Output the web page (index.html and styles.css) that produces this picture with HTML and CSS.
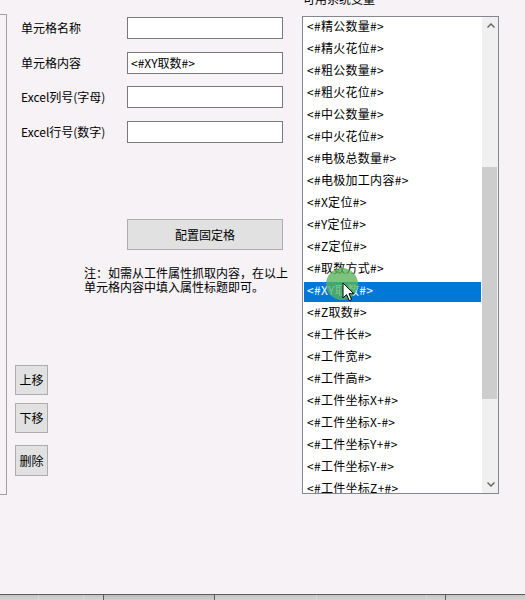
FILE: index.html
```html
<!DOCTYPE html>
<html lang="zh-CN">
<head>
<meta charset="utf-8">
<title>固定格配置</title>
<link rel="stylesheet" href="styles.css">
</head>
<body>
<div class="screen">
  <div class="window">
    <div class="side-frame"></div>

    <div class="editor">
      <div class="fields">
        <div class="field">
          <span class="field-label">单元格名称</span>
          <div class="textbox"></div>
        </div>
        <div class="field">
          <span class="field-label">单元格内容</span>
          <div class="textbox">&lt;#XY取数#&gt;</div>
        </div>
        <div class="field">
          <span class="field-label">Excel列号(字母)</span>
          <div class="textbox"></div>
        </div>
        <div class="field">
          <span class="field-label">Excel行号(数字)</span>
          <div class="textbox"></div>
        </div>
      </div>

      <button class="btn btn-wide">配置固定格</button>

      <p class="note">注：如需从工件属性抓取内容，在以上<br>单元格内容中填入属性标题即可。</p>

      <div class="order-buttons">
        <button class="btn btn-small">上移</button>
        <button class="btn btn-small btn-down">下移</button>
        <button class="btn btn-small btn-del">删除</button>
      </div>
    </div>

    <div class="vars">
      <div class="vars-title">可用系统变量</div>
      <div class="listbox">
        <ul class="items">
          <li class="item">&lt;#精公数量#&gt;</li>
          <li class="item">&lt;#精火花位#&gt;</li>
          <li class="item">&lt;#粗公数量#&gt;</li>
          <li class="item">&lt;#粗火花位#&gt;</li>
          <li class="item">&lt;#中公数量#&gt;</li>
          <li class="item">&lt;#中火花位#&gt;</li>
          <li class="item">&lt;#电极总数量#&gt;</li>
          <li class="item">&lt;#电极加工内容#&gt;</li>
          <li class="item">&lt;#X定位#&gt;</li>
          <li class="item">&lt;#Y定位#&gt;</li>
          <li class="item">&lt;#Z定位#&gt;</li>
          <li class="item">&lt;#取数方式#&gt;</li>
          <li class="item is-selected">&lt;#XY取数#&gt;</li>
          <li class="item">&lt;#Z取数#&gt;</li>
          <li class="item">&lt;#工件长#&gt;</li>
          <li class="item">&lt;#工件宽#&gt;</li>
          <li class="item">&lt;#工件高#&gt;</li>
          <li class="item">&lt;#工件坐标X+#&gt;</li>
          <li class="item">&lt;#工件坐标X-#&gt;</li>
          <li class="item">&lt;#工件坐标Y+#&gt;</li>
          <li class="item">&lt;#工件坐标Y-#&gt;</li>
          <li class="item">&lt;#工件坐标Z+#&gt;</li>
        </ul>
        <div class="scrollbar">
          <div class="scroll-arrow">
            <svg width="8" height="5" viewBox="0 0 8 5"><path d="M0.5 4.5 L4 1 L7.5 4.5" fill="none" stroke="#606060" stroke-width="1.4"/></svg>
          </div>
          <div class="scroll-track"><div class="scroll-thumb"></div></div>
          <div class="scroll-arrow">
            <svg width="8" height="5" viewBox="0 0 8 5"><path d="M0.5 0.5 L4 4 L7.5 0.5" fill="none" stroke="#606060" stroke-width="1.4"/></svg>
          </div>
        </div>
      </div>
    </div>
  </div>

  <div class="taskstrip">
    <span class="strip-cell w39"></span>
    <span class="strip-cell w45"></span>
    <span class="strip-cell w20 dark-edge"></span>
    <span class="strip-cell w111 dark-edge shaded"></span>
    <span class="strip-cell w102"></span>
    <span class="strip-cell w110"></span>
    <span class="strip-cell w19 dark-edge"></span>
    <span class="strip-cell rest"></span>
  </div>

  <!-- click highlight and pointer -->
  <div class="click-ring"></div>
  <svg class="pointer" width="13" height="20" viewBox="0 0 13 20">
    <path d="M1 1 L1 16 L4.6 12.6 L7.2 18.6 L9.6 17.6 L7 11.7 L11.8 11.7 Z" fill="#fff" stroke="#000" stroke-width="1" stroke-linejoin="round"/>
  </svg>
</div>
</body>
</html>
```

FILE: styles.css
```css
* {
  box-sizing: border-box;
}

html, body {
  margin: 0;
  padding: 0;
}

body {
  background: #f6f2f6;
  font-family: "Noto Sans CJK SC", "Noto Sans", sans-serif;
  font-size: 12px;
  color: #000;
}

.screen {
  position: relative;
  width: 525px;
  height: 600px;
  overflow: hidden;
  display: flex;
  flex-direction: column;
}

.window {
  height: 594px;
  display: flex;
  flex-direction: row;
  align-items: flex-start;
}

/* edge of the neighbouring panel */
.side-frame {
  flex: 0 0 7px;
  height: 481px;
  margin-top: 14px;
  border: 1px solid #a0a0a0;
  border-left: none;
}

/* ---------- editor column ---------- */
.editor {
  flex: 0 0 295px;
  display: flex;
  flex-direction: column;
  align-items: flex-start;
}

.fields {
  margin-top: 17px;
  padding-left: 14px;
  display: flex;
  flex-direction: column;
  gap: 12.7px;
}

.field {
  display: flex;
  align-items: center;
  height: 22px;
}

.field-label {
  width: 106px;
  line-height: 14px;
  white-space: nowrap;
}

.textbox {
  width: 156px;
  height: 22px;
  background: #fff;
  border: 1px solid #7a7a7a;
  padding: 0 3px;
  line-height: 20px;
  font-size: 12px;
  white-space: nowrap;
}

.btn {
  font-family: "Noto Sans CJK SC", "Noto Sans", sans-serif;
  font-size: 12px;
  color: #000;
  background: #e1e1e1;
  border: 1px solid #adadad;
  padding: 0;
  margin: 0;
  line-height: 14px;
}

.btn-wide {
  margin-top: 76px;
  margin-left: 120px;
  width: 156px;
  height: 31px;
}

.note {
  margin: 16px 0 0 77px;
  line-height: 14px;
  white-space: nowrap;
}

.order-buttons {
  margin-top: 71px;
  margin-left: 8px;
  display: flex;
  flex-direction: column;
}

.btn-small {
  width: 33px;
  height: 30px;
}

.btn-down {
  margin-top: 8px;
}

.btn-del {
  margin-top: 12px;
  height: 31px;
}

/* ---------- variable list ---------- */
.vars {
  flex: 0 0 197px;
  display: flex;
  flex-direction: column;
}

.vars-title {
  margin-top: -8px;
  padding-left: 1px;
  height: 14px;
  line-height: 14px;
  white-space: nowrap;
}

.listbox {
  margin-top: 10px;
  height: 478px;
  background: #fff;
  border: 1px solid #828790;
  display: flex;
  flex-direction: row;
  overflow: hidden;
}

.items {
  list-style: none;
  margin: 0;
  padding: 0;
  flex: 0 0 179px;
  overflow: hidden;
}

.item {
  height: 22px;
  line-height: 15px;
  padding-left: 3px;
  border: 1px solid transparent;
  font-size: 12px;
  letter-spacing: 0.3px;
  white-space: nowrap;
}

.item.is-selected {
  background: #0078d7;
  background-clip: padding-box;
  color: #fff;
}

.scrollbar {
  flex: 0 0 16px;
  background: #f0f0f0;
  display: flex;
  flex-direction: column;
}

.scroll-arrow {
  height: 17px;
  display: flex;
  align-items: center;
  justify-content: center;
  padding-left: 1px;
}

.scroll-track {
  flex: 1;
}

.scroll-thumb {
  width: 15px;
  height: 232px;
  margin-top: 133px;
  background: #cdcdcd;
}

/* ---------- bottom strip ---------- */
.taskstrip {
  height: 6px;
  display: flex;
  border-top: 1px solid #5e5e5e;
  background: linear-gradient(#c4c4c4, #d6d6d6);
}

.strip-cell {
  height: 100%;
  border-right: 1px solid #d8d8d8;
}

.strip-cell.dark-edge {
  border-right-color: #5e5e5e;
}

.strip-cell.shaded {
  background: linear-gradient(#bcbcbc, #cfcfcf);
}

.w39 { width: 39px; }
.w45 { width: 45px; }
.w20 { width: 20px; }
.w111 { width: 111px; }
.w102 { width: 102px; }
.w110 { width: 110px; }
.w19 { width: 19px; }
.rest { flex: 1; border-right: none; }

/* ---------- pointer overlay ---------- */
.click-ring {
  position: absolute;
  left: 326px;
  top: 268px;
  width: 32px;
  height: 32px;
  border-radius: 50%;
  background: rgba(88, 178, 88, 0.78);
}

.pointer {
  position: absolute;
  left: 342px;
  top: 282px;
}
```
